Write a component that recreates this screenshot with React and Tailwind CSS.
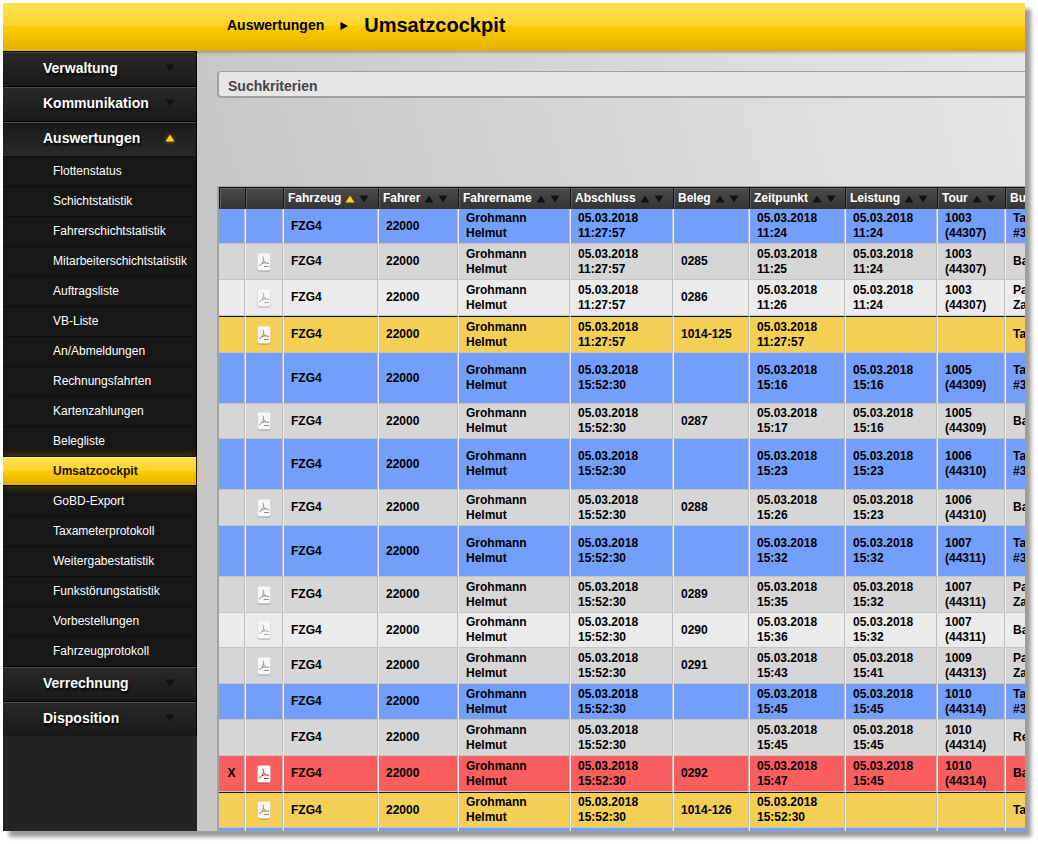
// src/pages/UmsatzcockpitPage.jsx
import { useState } from "react";
import clsx from "clsx";

const MENU = [
  { label: "Verwaltung" },
  { label: "Kommunikation" },
  {
    label: "Auswertungen",
    items: [
      "Flottenstatus",
      "Schichtstatistik",
      "Fahrerschichtstatistik",
      "Mitarbeiterschichtstatistik",
      "Auftragsliste",
      "VB-Liste",
      "An/Abmeldungen",
      "Rechnungsfahrten",
      "Kartenzahlungen",
      "Belegliste",
      "Umsatzcockpit",
      "GoBD-Export",
      "Taxameterprotokoll",
      "Weitergabestatistik",
      "Funkstörungstatistik",
      "Vorbestellungen",
      "Fahrzeugprotokoll",
    ],
  },
  { label: "Verrechnung" },
  { label: "Disposition" },
];

const COLUMNS = [
  { key: "storno", label: "", width: "w-[26px]" },
  { key: "pdf", label: "", width: "w-[38px]" },
  { key: "fahrzeug", label: "Fahrzeug", width: "w-[95px]" },
  { key: "fahrer", label: "Fahrer", width: "w-[80px]" },
  { key: "fahrername", label: "Fahrername", width: "w-[112px]" },
  { key: "abschluss", label: "Abschluss", width: "w-[103px]" },
  { key: "beleg", label: "Beleg", width: "w-[76px]" },
  { key: "zeitpunkt", label: "Zeitpunkt", width: "w-[96px]" },
  { key: "leistung", label: "Leistung", width: "w-[92px]" },
  { key: "tour", label: "Tour", width: "w-[68px]" },
  { key: "bu", label: "Bu", width: "w-[80px]" },
];

const DAY = "05.03.2018";
const FIRST = "11:27:57";
const SECOND = "15:52:30";

// tone: blue = trip, dark/light = payment, yellow = shift total, red = cancelled
const ROWS = [
  { tone: "blue", h: 35, end: FIRST, at: "11:24", done: "11:24", tour: ["1003", "(44307)"], text: ["Ta", "#3"] },
  { tone: "dark", h: 36, pdf: true, end: FIRST, beleg: "0285", at: "11:25", done: "11:24", tour: ["1003", "(44307)"], text: ["Ba"] },
  { tone: "light", h: 36, pdf: true, end: FIRST, beleg: "0286", at: "11:26", done: "11:24", tour: ["1003", "(44307)"], text: ["Pa", "Za"] },
  { tone: "yellow", h: 37, pdf: true, end: FIRST, beleg: "1014-125", at: FIRST, text: ["Ta"] },
  { tone: "blue", h: 51, end: SECOND, at: "15:16", done: "15:16", tour: ["1005", "(44309)"], text: ["Ta", "#3"] },
  { tone: "dark", h: 35, pdf: true, end: SECOND, beleg: "0287", at: "15:17", done: "15:16", tour: ["1005", "(44309)"], text: ["Ba"] },
  { tone: "blue", h: 51, end: SECOND, at: "15:23", done: "15:23", tour: ["1006", "(44310)"], text: ["Ta", "#3"] },
  { tone: "dark", h: 36, pdf: true, end: SECOND, beleg: "0288", at: "15:26", done: "15:23", tour: ["1006", "(44310)"], text: ["Ba"] },
  { tone: "blue", h: 51, end: SECOND, at: "15:32", done: "15:32", tour: ["1007", "(44311)"], text: ["Ta", "#3"] },
  { tone: "dark", h: 36, pdf: true, end: SECOND, beleg: "0289", at: "15:35", done: "15:32", tour: ["1007", "(44311)"], text: ["Pa", "Za"] },
  { tone: "light", h: 35, pdf: true, end: SECOND, beleg: "0290", at: "15:36", done: "15:32", tour: ["1007", "(44311)"], text: ["Ba"] },
  { tone: "dark", h: 36, pdf: true, end: SECOND, beleg: "0291", at: "15:43", done: "15:41", tour: ["1009", "(44313)"], text: ["Pa", "Za"] },
  { tone: "blue", h: 36, end: SECOND, at: "15:45", done: "15:45", tour: ["1010", "(44314)"], text: ["Ta", "#3"] },
  { tone: "dark", h: 36, end: SECOND, at: "15:45", done: "15:45", tour: ["1010", "(44314)"], text: ["Re"] },
  { tone: "red", h: 36, storno: true, pdf: true, end: SECOND, beleg: "0292", at: "15:47", done: "15:45", tour: ["1010", "(44314)"], text: ["Ba"] },
  { tone: "yellow", h: 36, pdf: true, end: SECOND, beleg: "1014-126", at: SECOND, text: ["Ta"] },
];

const TONE_CLASS = {
  blue: "bg-[#739ffb]",
  dark: "bg-[#d6d6d6]",
  light: "bg-[#ebebeb]",
  yellow: "bg-[#f3cf56]",
  red: "bg-[#fb5e5e]",
};

const HEIGHT_CLASS = {
  35: "h-[35px]",
  36: "h-9",
  37: "h-[37px]",
  51: "h-[51px]",
};

const PDF_STROKE = {
  dark: "stroke-[#8e8e8e]",
  light: "stroke-[#a8a8a8]",
  yellow: "stroke-[#a88528]",
  red: "stroke-[#b03c3c]",
};

function Triangle({ up, active, className }) {
  return (
    <svg
      viewBox="0 0 10 8"
      className={clsx(
        "h-2 w-2.5",
        active ? "fill-[#ffd11a]" : "fill-[#121212]",
        className
      )}
      aria-hidden="true"
    >
      <path d={up ? "M5 0.5 9.5 7.5H0.5Z" : "M0.5 0.5H9.5L5 7.5Z"} />
    </svg>
  );
}

function PdfIcon({ tone }) {
  return (
    <svg viewBox="0 0 14 19" className="h-[19px] w-3.5" aria-hidden="true">
      <rect x="0.4" y="1.6" width="13.2" height="17" rx="1.8" fill="#000" fillOpacity="0.28" />
      <rect x="0.5" y="0.5" width="13" height="17" rx="1.6" fill="#f7f7f7" />
      <path
        d="M5.6 3.8C6.8 4.2 6.6 6 6.5 7.2M6.5 7.2C6 9.6 4.6 11.8 2.2 12.8M6.5 7.2C7.4 9 9 10.4 12 10.4M4.6 10.8C6.2 10 7.6 9.8 9 9.8"
        fill="none"
        strokeWidth="1"
        className={PDF_STROKE[tone]}
      />
      <path d="M7 13.5H12" fill="none" strokeWidth="1" className={PDF_STROKE[tone]} />
    </svg>
  );
}

function Header() {
  return (
    <header className="z-10 flex h-12 shrink-0 items-center bg-[linear-gradient(#ffe24f,#ffd430_47%,#ffcb00_48%,#deb000)] pb-1 pl-56 shadow-[0_1px_3px_rgba(0,0,0,0.35)]">
      <nav aria-label="Breadcrumb" className="flex items-center gap-4 text-black">
        <a href="#auswertungen" className="text-[14px] font-bold">
          Auswertungen
        </a>
        <svg viewBox="0 0 8 8" className="mt-0.5 size-2" aria-hidden="true">
          <path d="M0.5 0 8 4 0.5 8Z" />
        </svg>
        <h1 className="text-[20px] leading-6 font-bold">Umsatzcockpit</h1>
      </nav>
    </header>
  );
}

function Sidebar() {
  const [open, setOpen] = useState("Auswertungen");
  const [current, setCurrent] = useState("Umsatzcockpit");

  return (
    <aside className="w-[194px] shrink-0 bg-[#242424]">
      {MENU.map((group) => {
        const isOpen = open === group.label;
        return (
          <div key={group.label} className="border-r border-black">
            <button
              type="button"
              aria-expanded={isOpen}
              onClick={() => setOpen(isOpen ? "" : group.label)}
              className={clsx(
                "flex h-[35px] w-full items-center border-t border-black pb-0.5 pl-10 text-left text-[14px] font-bold text-white shadow-[inset_0_1px_0_#4c4c4c] [text-shadow:1px_2px_2px_#000]",
                isOpen
                  ? "bg-[linear-gradient(#191919,#292929)]"
                  : "bg-[linear-gradient(#292929,#191919)]"
              )}
            >
              <span className="w-[122px]">{group.label}</span>
              <Triangle
                up={isOpen}
                active={isOpen}
                className={isOpen ? "drop-shadow-[0_0_2px_#a07800]" : ""}
              />
            </button>

            {isOpen && group.items && (
              <ul>
                {group.items.map((item) => (
                  <li key={item}>
                    <a
                      href={`#${item.toLowerCase()}`}
                      onClick={() => setCurrent(item)}
                      className={clsx(
                        "flex h-[30px] items-center border-t pl-[50px] text-[12px] whitespace-nowrap",
                        item === current
                          ? "relative border-b border-[#111111] bg-[linear-gradient(#ffe24f,#ffd430_47%,#ffcb00_50%,#deb000)] font-bold text-[#111111] shadow-[0_0_10px_rgba(255,203,0,0.3),inset_0_1px_0_#ffec8a]"
                          : "border-[#0d0d0d] bg-[#171717] pb-0.5 text-white"
                      )}
                    >
                      {item}
                    </a>
                  </li>
                ))}
              </ul>
            )}
          </div>
        );
      })}
    </aside>
  );
}

function SortHeader({ label, active, onSort }) {
  return (
    <div className="flex items-center gap-1 pl-1">
      <span>{label}</span>
      <button type="button" aria-label={`${label} aufsteigend`} onClick={onSort}>
        <Triangle up active={active} />
      </button>
      <button type="button" aria-label={`${label} absteigend`} onClick={onSort}>
        <Triangle />
      </button>
    </div>
  );
}

function Cell({ lines = [], total, className }) {
  return (
    <td
      className={clsx(
        "border-r border-b border-l border-r-[#bfbfbf] border-b-[#c4c4c4] border-l-[#ebebeb] p-0 align-middle first:border-l-0",
        total && "border-t border-t-[#1a1a1a]",
        className || "pl-[7px]"
      )}
    >
      {lines.map((line, i) => (
        <div key={i}>{line}</div>
      ))}
    </td>
  );
}

function RevenueTable() {
  const [sortKey, setSortKey] = useState("fahrzeug");

  return (
    <table className="w-[868px] table-fixed border-separate border-spacing-0 border-t border-l-2 border-[#a3a3a3] text-[12px] leading-[15px] font-bold text-black">
      <thead>
        <tr className="h-[22px]">
          {COLUMNS.map((col) => (
            <th
              key={col.key}
              scope="col"
              className={clsx(
                "border-t border-l border-[#141414] bg-[linear-gradient(#4b4b4b,#343434)] p-0 text-left font-bold whitespace-nowrap text-white shadow-[inset_1px_1px_0_#606060]",
                col.width
              )}
            >
              {col.label && (
                <SortHeader
                  label={col.label}
                  active={sortKey === col.key}
                  onSort={() => setSortKey(col.key)}
                />
              )}
            </th>
          ))}
        </tr>
      </thead>
      <tbody>
        {ROWS.map((row, i) => {
          const total = row.tone === "yellow";
          return (
            <tr key={i} className={clsx(TONE_CLASS[row.tone], HEIGHT_CLASS[row.h])}>
              <Cell total={total} lines={row.storno ? ["X"] : []} className="text-center" />
              <Cell
                total={total}
                className="pt-px pr-px"
                lines={
                  row.pdf
                    ? [
                        <a key="pdf" href="#beleg" aria-label="Beleg als PDF" className="flex justify-center">
                          <PdfIcon tone={row.tone} />
                        </a>,
                      ]
                    : []
                }
              />
              <Cell total={total} lines={["FZG4"]} />
              <Cell total={total} lines={["22000"]} />
              <Cell total={total} lines={["Grohmann", "Helmut"]} />
              <Cell total={total} lines={[DAY, row.end]} />
              <Cell total={total} lines={row.beleg ? [row.beleg] : []} />
              <Cell total={total} lines={[DAY, row.at]} />
              <Cell total={total} lines={row.done ? [DAY, row.done] : []} />
              <Cell total={total} lines={row.tour} />
              <Cell total={total} lines={row.text} />
            </tr>
          );
        })}
        {/* next shift starts here */}
        <tr className={clsx(TONE_CLASS.blue, HEIGHT_CLASS[51])}>
          {COLUMNS.map((col) => (
            <Cell key={col.key} />
          ))}
        </tr>
      </tbody>
    </table>
  );
}

export default function UmsatzcockpitPage() {
  return (
    <div className="h-screen bg-white pt-[3px] pr-[13px] pb-[13px] pl-[3px] font-['Liberation_Sans',Arial,sans-serif]">
      <div className="flex h-full flex-col overflow-hidden bg-[#242424] shadow-[6px_6px_4px_#9c9c9c]">
        <Header />
        <div className="flex min-h-0 flex-1">
          <Sidebar />
          <main className="min-w-0 flex-1 overflow-hidden bg-[linear-gradient(75deg,#c8c8c8_20%,#e6e6e6)] pt-5 pl-5">
            <button
              type="button"
              className="mb-22 block h-[27px] w-full rounded-l border-t border-b-2 border-l-2 border-[#a0a0a0] bg-[#e6e6e6] pt-1 pl-[9px] text-left text-[14px] leading-5 font-bold text-[#444444]"
            >
              Suchkriterien
            </button>
            <RevenueTable />
          </main>
        </div>
      </div>
    </div>
  );
}
